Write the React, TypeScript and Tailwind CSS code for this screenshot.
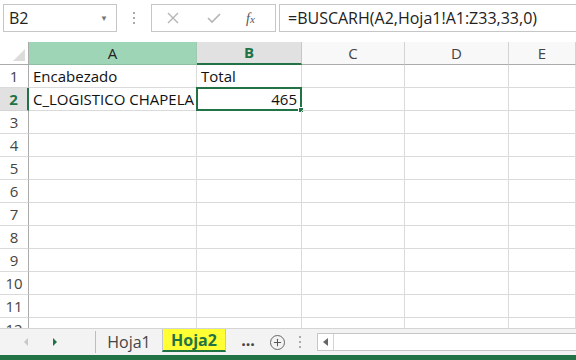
import { Plus } from "lucide-react";

const font = { fontFamily: '"Open Sans", "Noto Sans", sans-serif' };

const cols = [
  { key: "A", w: "w-[168px]" },
  { key: "B", w: "w-[105px]" },
  { key: "C", w: "w-[103px]" },
  { key: "D", w: "w-[104px]" },
  { key: "E", w: "flex-1" },
];

const rows = Array.from({ length: 12 }, (_, i) => i + 1);

function ColHeader({ label, w }: { label: string; w: string }) {
  if (label === "A")
    return (
      <div className={`${w} h-full flex items-center justify-center bg-[#9fd5b7] border-r border-[#9fc9b0] border-b border-b-[#8fbfa3] text-[#222]`}>
        {label}
      </div>
    );
  if (label === "B")
    return (
      <div className={`${w} h-full flex items-center justify-center bg-[#e1e1e1] border-r border-[#c6c6c6] border-b-2 border-b-[#217346] font-bold text-[#217346]`}>
        {label}
      </div>
    );
  return (
    <div className={`${w} h-full flex items-center justify-center bg-[#f8f8f8] border-r border-[#d4d4d4] border-b border-b-[#ababab] text-[#444]`}>
      {label}
    </div>
  );
}

function Cell({ col, row }: { col: string; row: number }) {
  const w = cols.find((c) => c.key === col)!.w;
  let content: React.ReactNode = null;
  if (row === 1 && col === "A") content = <span className="pl-[4px]">Encabezado</span>;
  if (row === 1 && col === "B") content = <span className="pl-[4px]">Total</span>;
  if (row === 2 && col === "A") content = <span className="pl-[4px]">C_LOGISTICO CHAPELA</span>;
  const selected = row === 2 && col === "B";
  return (
    <div className={`${w} h-full relative flex items-center border-r border-b border-[#dadada] text-[#111]`}>
      {content}
      {selected && (
        <div className="absolute -left-[1px] -top-[1px] w-[106px] h-[24px] border-2 border-[#217346] flex items-center justify-end pr-[3px]">
          465
          <div className="absolute -right-[4px] -bottom-[4px] w-[6px] h-[6px] bg-[#217346] border border-white" />
        </div>
      )}
    </div>
  );
}

export default function App() {
  return (
    <div className="w-[576px] h-[360px] bg-white flex flex-col overflow-hidden" style={font}>
      {/* Formula bar */}
      <div className="h-[42px] flex items-start pt-[4px] pl-[3px] gap-0">
        <div className="w-[114px] h-[28px] border border-[#c6c6c6] flex items-center justify-between pl-[5px] pr-[8px] text-[16px] text-[#222]">
          <span>B2</span>
          <span className="text-[8px] text-[#777]">▼</span>
        </div>
        <div className="w-[34px] h-[28px] flex flex-col items-center justify-center gap-[3px]">
          <span className="w-[2px] h-[2px] bg-[#aaa]" />
          <span className="w-[2px] h-[2px] bg-[#aaa]" />
          <span className="w-[2px] h-[2px] bg-[#aaa]" />
        </div>
        <div className="w-[125px] h-[28px] border border-[#c6c6c6] flex items-center">
          <svg width="14" height="14" viewBox="0 0 14 14" className="ml-[14px]">
            <path d="M2 2 L12 12 M12 2 L2 12" stroke="#b5b5b5" strokeWidth="1.4" />
          </svg>
          <svg width="16" height="14" viewBox="0 0 16 14" className="ml-[26px]">
            <path d="M2 7 L6 11 L14 3" stroke="#b5b5b5" strokeWidth="1.6" fill="none" />
          </svg>
          <span className="ml-[24px] italic text-[14px] text-[#555]" style={{ fontFamily: '"Liberation Serif", serif' }}>
            f<span className="text-[11px]">x</span>
          </span>
        </div>
        <div className="flex-1 ml-[3px] h-[28px] border border-r-0 border-[#c6c6c6] flex items-center pl-[8px] text-[16px] text-[#222]">
          =BUSCARH(A2,Hoja1!A1:Z33,33,0)
        </div>
      </div>

      {/* Grid */}
      <div className="flex-1 overflow-hidden text-[15px]">
        <div className="h-[23px] flex">
          <div className="w-[29px] h-full bg-white border-r border-b border-[#ababab] relative">
            <svg width="12" height="12" viewBox="0 0 12 12" className="absolute right-[3px] bottom-[3px]">
              <path d="M12 0 L12 12 L0 12 Z" fill="#dcdcdc" />
            </svg>
          </div>
          {cols.map((c) => (
            <ColHeader key={c.key} label={c.key} w={c.w} />
          ))}
        </div>
        {rows.map((r) => (
          <div key={r} className="h-[23px] flex">
            <div
              className={
                r === 2
                  ? "w-[29px] h-full flex items-center justify-center bg-[#e1e1e1] border-r-2 border-[#217346] border-b border-b-[#d4d4d4] font-bold text-[#217346]"
                  : "w-[29px] h-full flex items-center justify-center bg-white border-r border-[#ababab] border-b border-b-[#dadada] text-[#444]"
              }
            >
              {r}
            </div>
            {cols.map((c) => (
              <Cell key={c.key} col={c.key} row={r} />
            ))}
          </div>
        ))}
      </div>

      {/* Sheet tabs */}
      <div className="h-[27px] bg-[#f3f3f3] border-t border-[#d4d4d4] flex items-stretch text-[16px]">
        <div className="w-[96px] flex items-center border-r border-[#bdbdbd] my-[2px]">
          <svg width="6" height="8" viewBox="0 0 6 8" className="ml-[23px]">
            <path d="M5 0 L1 4 L5 8 Z" fill="#c8c8c8" />
          </svg>
          <svg width="6" height="8" viewBox="0 0 6 8" className="ml-[23px]">
            <path d="M1 0 L5 4 L1 8 Z" fill="#217346" />
          </svg>
        </div>
        <div className="w-[66px] flex items-center justify-center text-[#444]">Hoja1</div>
        <div className="w-[64px] flex items-center justify-center bg-[#ffff33] border-x border-[#c6c6c6] border-b-2 border-b-[#217346] mb-[3px] font-bold text-[#217346]">
          Hoja2
        </div>
        <div className="w-[44px] flex items-center justify-center font-bold text-[#444] pb-[4px]">...</div>
        <div className="flex items-center">
          <div className="w-[15px] h-[15px] rounded-full border border-[#666] flex items-center justify-center">
            <Plus size={11} strokeWidth={2.2} color="#555" />
          </div>
        </div>
        <div className="w-[30px] flex flex-col items-center justify-center gap-[3px]">
          <span className="w-[2px] h-[2px] bg-[#aaa]" />
          <span className="w-[2px] h-[2px] bg-[#aaa]" />
          <span className="w-[2px] h-[2px] bg-[#aaa]" />
        </div>
        <div className="flex-1 ml-[2px] my-[4px] bg-white border border-r-0 border-[#c6c6c6] flex items-center">
          <div className="w-[16px] h-full border-r border-[#d4d4d4] flex items-center justify-center">
            <svg width="5" height="8" viewBox="0 0 5 8">
              <path d="M5 0 L0 4 L5 8 Z" fill="#666" />
            </svg>
          </div>
        </div>
      </div>
      <div className="h-[5px] bg-[#217346]" />
    </div>
  );
}
